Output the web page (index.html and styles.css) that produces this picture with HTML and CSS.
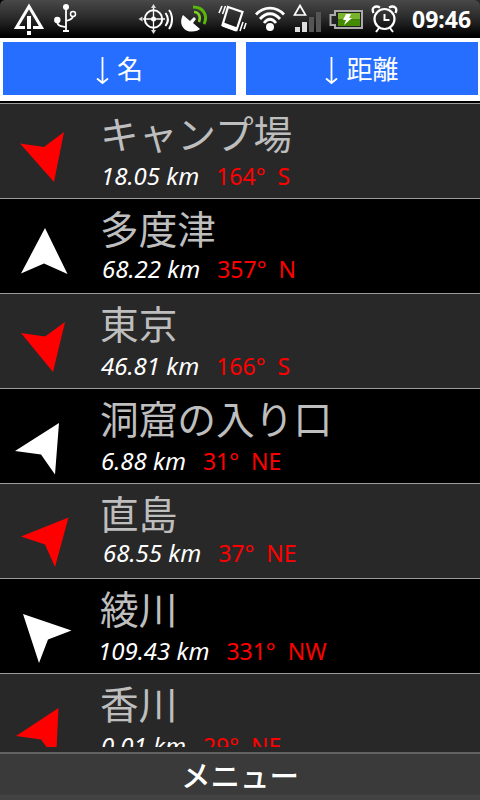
FILE: index.html
```
<!DOCTYPE html>
<html lang="ja">

<head>
    <meta charset="UTF-8">
    <meta name="viewport" content="width=device-width, initial-scale=1.0">
    <title>メニュー</title>
    <link rel="stylesheet" href="styles.css">
</head>

<body>
    <div class="screen">
        <div class="status-bar">
            <svg class="status-icons" width="404" height="38" viewBox="0 0 404 38" fill="none" stroke="#fff">
                <!-- corner -->
                <path d="M0 0h5Q0 0 0 6z" fill="#000" stroke="none" />
                <!-- warning -->
                <path d="M25 27.5H16.500L29 6.500L41.500 27.500H33" stroke-width="3" />
                <path d="M29 16v13M29 31v4" stroke-width="4" />
                <!-- usb -->
                <path d="M66 8v23M57 20c0 6 3 6 9 7M66 21c4-1 7-2 7-5" stroke-width="1.800" />
                <circle cx="66" cy="7" r="3" fill="#fff" stroke="none" />
                <circle cx="57.300" cy="20" r="3.200" fill="#fff" stroke="none" />
                <circle cx="73" cy="14" r="2.500" stroke-width="1.500" />
                <path d="M63 31h6" stroke-width="2" />
                <!-- gps -->
                <circle cx="153.500" cy="19" r="8.700" stroke-width="2" />
                <path d="M153.500 8v22M143 19h22" stroke-width="1.300" />
                <circle cx="153.500" cy="19" r="2.500" fill="#fff" stroke="none" />
                <path d="M153.500 4l2.500 4h-5zM153.500 34l2.500-4h-5zM138.500 19l4-2.500v5z" fill="#ddd" stroke="none" />
                <path d="M165.500 13c3 4 3 9 0 13M169 10c4 5 4 14 0 19" stroke-width="2" />
                <!-- satellite dish -->
                <path d="M183 15C178 24 184 32 192 31.500C196 31.500 199 30 200 29L193 23L196 19L194 17L190 21z" fill="#fff" stroke="none" />
                <path d="M194 12c5 0 7 5 5 10" stroke="#80d020" stroke-width="2.500" />
                <path d="M193 7c11 0 15 9 11 17" stroke="#58b80c" stroke-width="3" />
                <!-- vibrate -->
                <path d="M228 7L242.500 12L236.500 30L222.500 25z" stroke-width="2.200" />
                <path d="M223 24.500l13.500 5" stroke-width="4.500" />
                <path d="M222 6l-3 7M225.500 6l-3 8M240 31l3-9M244 29l2-6" stroke-width="1.600" />
                <!-- wifi -->
                <path d="M256 14.500C264 6 276 6 284 14.500M260 19C266 12 274 12 280 19M264 23C268 18 272 18 276 23" stroke-width="2.800" />
                <circle cx="270" cy="27" r="4" fill="#fff" stroke="none" />
                <!-- signal -->
                <path d="M300 5.500L305.500 15h-11z" stroke-width="1.700" />
                <path d="M295 27h5v5h-5zM302 22h5v10h-5z" fill="#ddd" stroke="none" />
                <path d="M309 17h5v15h-5zM316 12h5v20h-5z" fill="#555" stroke="none" />
                <!-- battery -->
                <path d="M335 11h27v17h-27v-3h-4.500V15h4.500z" stroke="#aaa" stroke-width="2" fill="#222" />
                <path d="M338 13h22v6.500h-22z" fill="#79b52c" stroke="none" />
                <path d="M338 19.500h22v6.500h-22z" fill="#438c00" stroke="none" />
                <path d="M346 14h5l-2 4h3l-8 7 2-5h-3z" fill="#fff" stroke="none" />
                <!-- alarm -->
                <circle cx="384.500" cy="19" r="10" stroke-width="2.200" />
                <path d="M384.500 14v6h5M379 28l-3 4M390 28l3 4" stroke-width="2" />
                <path d="M373.500 13C371 8 375 5 380 7.500M389 7.500C394 5 398 8 395.500 13" stroke-width="2.300" />
            </svg>
            <span class="clock">09:46</span>
        </div>

        <div class="tabs">
            <div class="tab">
                <svg class="sort" width="13" height="28" viewBox="0 0 13 28">
                    <path d="M6.500 0v26M1 21.500l5.500 4.500 5.500-4.500" />
                </svg>
                <span>名</span>
            </div>
            <div class="tab">
                <svg class="sort" width="13" height="28" viewBox="0 0 13 28">
                    <path d="M6.500 0v26M1 21.500l5.500 4.500 5.500-4.500" />
                </svg>
                <span>距離</span>
            </div>
        </div>

        <div class="list">
            <div class="row red first">
                <svg class="arrow" viewBox="0 0 95 94"><path d="M20 39.500L44 43L64 28L54 78z" /></svg>
                <div class="info">
                    <div class="name">キャンプ場</div>
                    <div class="meta"><i>18.05 km</i><span class="deg">164°</span><span class="dir">S</span></div>
                </div>
            </div>
            <div class="row second">
                <svg class="arrow" viewBox="0 0 95 94"><path d="M45 29L67.500 75L44 64.500L21 74.500z" /></svg>
                <div class="info">
                    <div class="name">多度津</div>
                    <div class="meta"><i>68.22 km</i><span class="deg">357°</span><span class="dir">N</span></div>
                </div>
            </div>
            <div class="row red third">
                <svg class="arrow" viewBox="0 0 95 94"><path d="M21 39L45 42.500L65 28L53 78z" /></svg>
                <div class="info">
                    <div class="name">東京</div>
                    <div class="meta"><i>46.81 km</i><span class="deg">166°</span><span class="dir">S</span></div>
                </div>
            </div>
            <div class="row fourth">
                <svg class="arrow" viewBox="0 0 95 94"><path d="M59 34L15 62L41 65.500L55 85.500z" /></svg>
                <div class="info">
                    <div class="name">洞窟の入り口</div>
                    <div class="meta"><i>6.88 km</i><span class="deg">31°</span><span class="dir">NE</span></div>
                </div>
            </div>
            <div class="row red fifth">
                <svg class="arrow" viewBox="0 0 95 94"><path d="M68.500 33.500L21 52.500L45 60.500L55 83z" /></svg>
                <div class="info">
                    <div class="name">直島</div>
                    <div class="meta"><i>68.55 km</i><span class="deg">37°</span><span class="dir">NE</span></div>
                </div>
            </div>
            <div class="row sixth">
                <svg class="arrow" viewBox="0 0 95 94"><path d="M23 35L71.500 51.500L48 60.500L39 84z" /></svg>
                <div class="info">
                    <div class="name">綾川</div>
                    <div class="meta"><i>109.43 km</i><span class="deg">331°</span><span class="dir">NW</span></div>
                </div>
            </div>
            <div class="row red seventh">
                <svg class="arrow" viewBox="0 0 95 94"><path d="M58.500 34L16 62L41 65.500L56 86z" /></svg>
                <div class="info">
                    <div class="name">香川</div>
                    <div class="meta"><i>0.01 km</i><span class="deg">29°</span><span class="dir">NE</span></div>
                </div>
            </div>
        </div>

        <div class="menu">メニュー</div>
    </div>
</body>

</html>
```
FILE: styles.css
```
body {
    margin: 0;
    background: #000;
    font-family: "Noto Sans", "Noto Sans CJK JP", sans-serif;
}

.screen {
    display: flex;
    flex-direction: column;
    width: 480px;
    height: 800px;
    overflow: hidden;
    background: #282828;
}

/* status bar */
.status-bar {
    display: flex;
    height: 38px;
    background: linear-gradient(#494949, #282828 50%, #000 95%);
    border-top-right-radius: 6px;
}

.clock {
    padding-left: 8px;
    font: bold 23px/38px "Noto Sans", sans-serif;
    color: #fff;
}

/* sort buttons */
.tabs {
    display: grid;
    grid-template-columns: 233px 232px;
    column-gap: 10px;
    height: 53px;
    padding: 4px 2px 6px 3px;
    background: #fff;
}

.tab {
    display: flex;
    align-items: center;
    justify-content: center;
    gap: 8px;
    background: #266eff;
    color: #fff;
    font: 26px/51px "Noto Sans CJK JP", sans-serif;
}

.tab span {
    padding-bottom: 2px;
}

.sort {
    margin-top: 4px;
    fill: none;
    stroke: #fff;
    stroke-width: 1.8;
}

/* list */
.list {
    flex: 0 0 646px;
    box-sizing: border-box;
    padding-top: 2px;
    overflow: hidden;
    background: #000;
}

.row {
    display: flex;
    box-sizing: border-box;
    height: 95px;
    border-top: 1px solid #9a9c9a;
    background: #000;
}

.row.red {
    background: #282828;
}

.arrow {
    flex: none;
    width: 95px;
    height: 94px;
    fill: #fff;
}

.red .arrow {
    fill: #f00;
}

.info {
    padding-left: 5px;
    white-space: nowrap;
}

.name {
    height: 56px;
    font: 38.7px/56px "Noto Sans CJK JP", sans-serif;
    color: #bebebe;
}

.meta {
    display: flex;
    align-items: baseline;
    font-size: 23px;
    line-height: 32px;
    color: #f00;
}

.meta i {
    font-size: 24px;
    color: #fff;
}

.deg {
    margin-left: 17px;
}

.dir {
    margin-left: 12px;
}

.meta {
    padding-left: 1px;
}

.second .meta {
    margin-top: -2px;
    padding-left: 2px;
}

.fifth .meta {
    margin-top: -3px;
    padding-left: 3px;
}

.sixth .meta {
    margin-left: -3px;
}

/* bottom menu */
.menu {
    flex: 0 0 46px;
    margin-top: 5px;
    border-top: 2px solid #626262;
    background: linear-gradient(#3a3a3a 86%, #424242 90%);
    color: #fff;
    text-align: center;
    font: 500 29.5px/41px "Noto Sans CJK JP", sans-serif;
}
```
